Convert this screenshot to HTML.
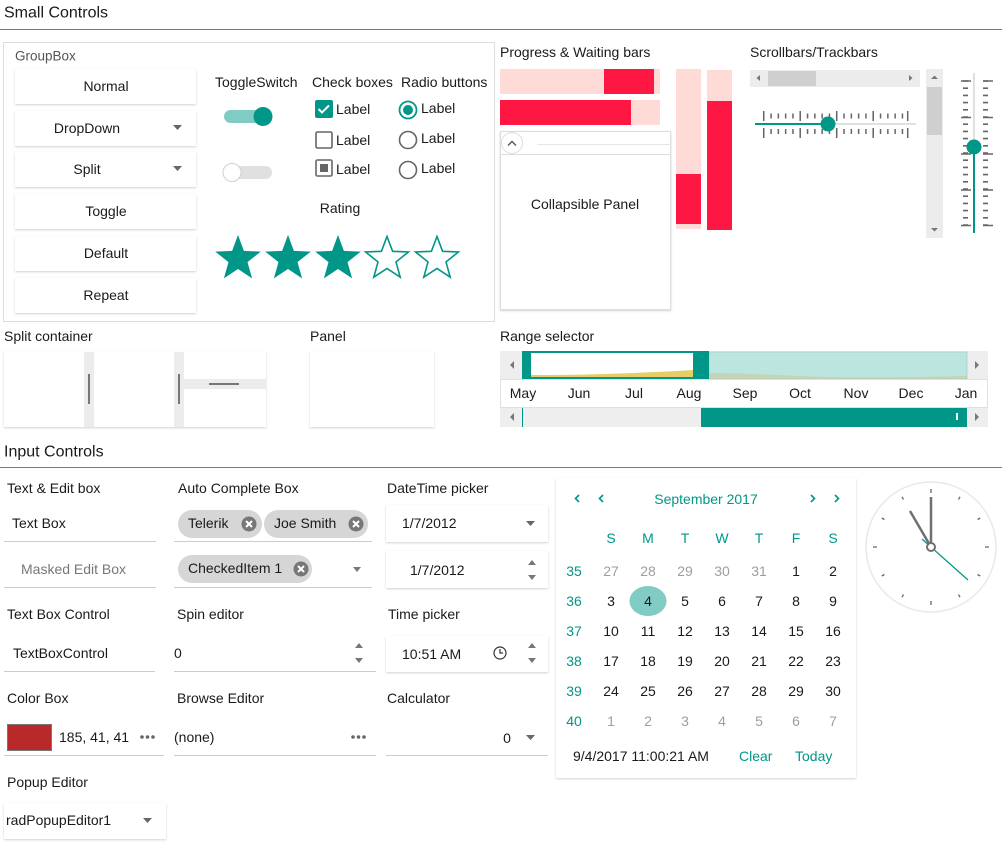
<!DOCTYPE html>
<html><head><meta charset="utf-8"><style>
html,body{margin:0;padding:0;background:#fff;width:1002px;height:843px;overflow:hidden}
svg{display:block}
text{font-family:"Liberation Sans",sans-serif;font-size:14px;fill:#1a1a1a;dominant-baseline:central}
.h{font-size:16px}
.c{text-anchor:middle}
.g{fill:#9e9e9e}
.t{fill:#009688}
.sub{fill:#555;font-size:13.5px}
</style></head><body>
<svg width="1002" height="843" viewBox="0 0 1002 843" xmlns="http://www.w3.org/2000/svg">
<defs>
<filter id="sh" x="-5%" y="-5%" width="110%" height="115%"><feDropShadow dx="0" dy="1" stdDeviation="1" flood-color="#000" flood-opacity="0.18"/></filter>
</defs>
<text x="4" y="13" class="h">Small Controls</text>
<rect x="0" y="29" width="1002" height="1" fill="#777"/>
<text x="4" y="452" class="h">Input Controls</text>
<rect x="0" y="467" width="1002" height="1" fill="#777"/>

<rect x="3.5" y="42.5" width="491" height="279" fill="#fff" stroke="#ddd"/>
<text x="15" y="56" class="sub">GroupBox</text>
<g fill="#fff" filter="url(#sh)">
<rect x="15" y="69" width="181" height="35"/>
<rect x="15" y="111" width="181" height="35"/>
<rect x="15" y="152" width="181" height="35"/>
<rect x="15" y="194" width="181" height="35"/>
<rect x="15" y="236" width="181" height="35"/>
<rect x="15" y="278" width="181" height="35"/>
</g>
<text x="106" y="86" class="c">Normal</text>
<text x="87" y="128" class="c">DropDown</text>
<text x="87" y="169" class="c">Split</text>
<text x="106" y="211" class="c">Toggle</text>
<text x="106" y="253" class="c">Default</text>
<text x="106" y="295" class="c">Repeat</text>
<path d="M173 125h9l-4.5 5z M173 166h9l-4.5 5z" fill="#666"/>

<text x="215" y="82">ToggleSwitch</text>
<rect x="224" y="110" width="46" height="13" rx="6.5" fill="#80cbc4"/>
<circle cx="263" cy="116.5" r="9.5" fill="#009688"/>
<rect x="224" y="166" width="48" height="13" rx="6.5" fill="#e0e0e0"/>
<circle cx="232" cy="172.5" r="9" fill="#fff" stroke="#d0d0d0"/>

<text x="312" y="82">Check boxes</text>
<rect x="315" y="100" width="18" height="18" rx="2" fill="#009688"/>
<path d="M318.5 109l3.5 3.5 7-7" stroke="#fff" stroke-width="2" fill="none"/>
<rect x="316" y="132" width="16" height="16" rx="1.5" fill="none" stroke="#666" stroke-width="1.6"/>
<rect x="316" y="160" width="16" height="16" rx="1.5" fill="none" stroke="#666" stroke-width="1.6"/>
<rect x="320" y="164" width="8" height="8" fill="#666"/>
<text x="336" y="109">Label</text>
<text x="336" y="140">Label</text>
<text x="336" y="169">Label</text>

<text x="401" y="82">Radio buttons</text>
<circle cx="408" cy="110" r="8.5" fill="none" stroke="#009688" stroke-width="1.8"/>
<circle cx="408" cy="110" r="5" fill="#009688"/>
<circle cx="408" cy="140" r="8.5" fill="none" stroke="#666" stroke-width="1.6"/>
<circle cx="408" cy="170" r="8.5" fill="none" stroke="#666" stroke-width="1.6"/>
<text x="421" y="108">Label</text>
<text x="421" y="138">Label</text>
<text x="421" y="168">Label</text>

<text x="340" y="208" class="c">Rating</text>
<g fill="#009688">
<polygon transform="translate(238,259)" points="0,-24 5.88,-8.09 22.83,-7.42 9.51,3.09 14.11,19.42 0,10 -14.11,19.42 -9.51,3.09 -22.83,-7.42 -5.88,-8.09"/>
<polygon transform="translate(288,259)" points="0,-24 5.88,-8.09 22.83,-7.42 9.51,3.09 14.11,19.42 0,10 -14.11,19.42 -9.51,3.09 -22.83,-7.42 -5.88,-8.09"/>
<polygon transform="translate(338,259)" points="0,-24 5.88,-8.09 22.83,-7.42 9.51,3.09 14.11,19.42 0,10 -14.11,19.42 -9.51,3.09 -22.83,-7.42 -5.88,-8.09"/>
</g>
<g fill="none" stroke="#009688" stroke-width="1.6">
<polygon transform="translate(387,259)" points="0,-22.5 5.6,-7.7 21.4,-7 9,2.9 13.2,18.2 0,9.4 -13.2,18.2 -9,2.9 -21.4,-7 -5.6,-7.7"/>
<polygon transform="translate(437,259)" points="0,-22.5 5.6,-7.7 21.4,-7 9,2.9 13.2,18.2 0,9.4 -13.2,18.2 -9,2.9 -21.4,-7 -5.6,-7.7"/>
</g>

<text x="500" y="52">Progress &amp; Waiting bars</text>
<rect x="500" y="69" width="160" height="25" fill="#ffdbd8"/>
<rect x="604" y="69" width="50" height="25" fill="#ff1744"/>
<rect x="500" y="100" width="160" height="25" fill="#ffdbd8"/>
<rect x="500" y="100" width="131" height="25" fill="#ff1744"/>
<rect x="676" y="69" width="25" height="160" fill="#ffdbd8"/>
<rect x="676" y="174" width="25" height="50" fill="#ff1744"/>
<rect x="707" y="70" width="25" height="160" fill="#ffdbd8"/>
<rect x="707" y="101" width="25" height="129" fill="#ff1744"/>

<rect x="500.5" y="131.5" width="170" height="178" fill="#fff" stroke="#ddd" filter="url(#sh)"/>
<rect x="500" y="154" width="171" height="1" fill="#ddd"/>
<rect x="537" y="144" width="134" height="1" fill="#e6e6e6"/>
<circle cx="512" cy="143" r="10.5" fill="#fff" stroke="#ddd"/>
<path d="M508 145.5l4-4 4 4" stroke="#555" stroke-width="1.4" fill="none"/>
<text x="585" y="204" class="c">Collapsible Panel</text>

<text x="750" y="52">Scrollbars/Trackbars</text>
<rect x="750" y="70" width="170" height="17" fill="#ececec"/>
<rect x="768" y="71" width="48" height="15" fill="#cfcfcf"/>
<path d="M760 75v6l-3.5-3z M909 75v6l3.5-3z" fill="#777"/>
<rect x="926" y="69" width="17" height="169" fill="#ececec"/>
<rect x="927" y="87" width="15" height="48" fill="#cfcfcf"/>
<path d="M931 79h7l-3.5-3.5z M931 228h7l-3.5 3.5z" fill="#777"/>
<line x1="763" y1="116" x2="909" y2="116" stroke="#666" stroke-width="5" stroke-dasharray="1.5 5.8"/>
<line x1="763" y1="131.5" x2="909" y2="131.5" stroke="#666" stroke-width="5" stroke-dasharray="1.5 5.8"/>
<g stroke="#666" stroke-width="1.5">
<path d="M763.7 111v10M800.2 111v10M836.7 111v10M873.2 111v10M907.7 111v10"/>
<path d="M763.7 128v10M800.2 128v10M836.7 128v10M873.2 128v10M907.7 128v10"/>
</g>
<rect x="755" y="123" width="161" height="2" fill="#e0e0e0"/>
<rect x="755" y="123" width="73" height="2" fill="#009688"/>
<circle cx="828" cy="124" r="7.5" fill="#009688"/>
<line x1="965.5" y1="80.2" x2="965.5" y2="227" stroke="#666" stroke-width="5" stroke-dasharray="1.6 5.6"/>
<line x1="985.5" y1="80.2" x2="985.5" y2="227" stroke="#666" stroke-width="5" stroke-dasharray="1.6 5.6"/>
<g stroke="#666" stroke-width="1.6">
<path d="M961 81h10M961 117.5h10M961 154h10M961 190h10M961 225.5h10"/>
<path d="M983 81h10M983 117.5h10M983 154h10M983 190h10M983 225.5h10"/>
</g>
<rect x="973" y="73" width="2" height="160" fill="#e0e0e0"/>
<rect x="973" y="147" width="2" height="86" fill="#009688"/>
<circle cx="974" cy="147" r="7.5" fill="#009688"/>

<text x="4" y="336">Split container</text>
<rect x="4" y="351" width="262" height="76" fill="#fff" filter="url(#sh)"/>
<rect x="84" y="352" width="10" height="75" fill="#ececec"/>
<rect x="174" y="352" width="10" height="75" fill="#ececec"/>
<rect x="184" y="379" width="82" height="10" fill="#ececec"/>
<rect x="88" y="374" width="2" height="30" fill="#777"/>
<rect x="178" y="374" width="2" height="30" fill="#777"/>
<rect x="209" y="383" width="30" height="2" fill="#777"/>
<text x="310" y="336">Panel</text>
<rect x="310" y="351" width="124" height="76" fill="#fff" filter="url(#sh)"/>

<text x="500" y="336">Range selector</text>
<rect x="500" y="351" width="488" height="28" fill="#eee"/>
<path d="M514 361v8l-4-4z M975 361v8l4-4z" fill="#777"/>
<rect x="709" y="352" width="258" height="27" fill="#bde5e0" stroke="#a0d0c8" stroke-width="0.8"/>
<path d="M709 373c40 0 80 3 120 4s90 0 138-1v3H709z" fill="#c8c89a" opacity="0.6"/>
<rect x="522" y="351" width="187" height="28" fill="#009688"/>
<rect x="531" y="353" width="162" height="24" fill="#fff"/>
<path d="M531 377v-2c60 0 110-2 162-5v7z" fill="#e0c040" opacity="0.8"/>
<rect x="500.5" y="379.5" width="487" height="28" fill="#fff" stroke="#e0e0e0"/>
<text x="523" y="393" class="c">May</text>
<text x="579" y="393" class="c">Jun</text>
<text x="634" y="393" class="c">Jul</text>
<text x="689" y="393" class="c">Aug</text>
<text x="745" y="393" class="c">Sep</text>
<text x="800" y="393" class="c">Oct</text>
<text x="856" y="393" class="c">Nov</text>
<text x="911" y="393" class="c">Dec</text>
<text x="966" y="393" class="c">Jan</text>
<rect x="500" y="408" width="488" height="19" fill="#eee"/>
<rect x="522" y="408" width="1" height="19" fill="#009688"/>
<rect x="701" y="408" width="266" height="19" fill="#009688"/>
<rect x="956" y="413" width="2" height="7" fill="#fff"/>
<path d="M514 413v8l-4-4z M975 413v8l4-4z" fill="#777"/>

<text x="7" y="488">Text &amp; Edit box</text>
<text x="12" y="523">Text Box</text>
<rect x="4" y="541" width="152" height="1" fill="#ccc"/>
<text x="21" y="569" style="fill:#777">Masked Edit Box</text>
<rect x="4" y="587" width="152" height="1" fill="#ccc"/>
<text x="7" y="614">Text Box Control</text>
<text x="13" y="653">TextBoxControl</text>
<rect x="4" y="671" width="151" height="1" fill="#ccc"/>
<text x="7" y="698">Color Box</text>
<rect x="7.5" y="724.5" width="44" height="26" fill="#b92929" stroke="#777"/>
<text x="59" y="737">185, 41, 41</text>
<g fill="#666"><circle cx="142" cy="737" r="1.8"/><circle cx="147.5" cy="737" r="1.8"/><circle cx="153" cy="737" r="1.8"/></g>
<rect x="4" y="755" width="160" height="1" fill="#ccc"/>
<text x="7" y="782">Popup Editor</text>
<rect x="4" y="803" width="162" height="36" fill="#fff" filter="url(#sh)"/>
<text x="6" y="820">radPopupEditor1</text>
<path d="M143 818h9l-4.5 5z" fill="#666"/>

<text x="178" y="488">Auto Complete Box</text>
<rect x="178" y="510" width="84" height="28" rx="14" fill="#d6d6d6"/>
<text x="188" y="523">Telerik</text>
<rect x="264" y="510" width="104" height="28" rx="14" fill="#d6d6d6"/>
<text x="274" y="523">Joe Smith</text>
<rect x="178" y="555" width="134" height="28" rx="14" fill="#d6d6d6"/>
<text x="188" y="568">CheckedItem 1</text>
<g>
<circle cx="249" cy="524" r="7.5" fill="#777"/><path d="M246 521l6 6M252 521l-6 6" stroke="#fff" stroke-width="2"/>
<circle cx="356" cy="524" r="7.5" fill="#777"/><path d="M353 521l6 6M359 521l-6 6" stroke="#fff" stroke-width="2"/>
<circle cx="301" cy="569" r="7.5" fill="#777"/><path d="M298 566l6 6M304 566l-6 6" stroke="#fff" stroke-width="2"/>
</g>
<rect x="174" y="541" width="198" height="1" fill="#ccc"/>
<path d="M353 567h8l-4 5z" fill="#777"/>
<rect x="174" y="587" width="198" height="1" fill="#ccc"/>
<text x="177" y="614">Spin editor</text>
<text x="174" y="653">0</text>
<path d="M355 648h8l-4-5z M355 658h8l-4 5z" fill="#777"/>
<rect x="174" y="671" width="202" height="1" fill="#ccc"/>
<text x="177" y="698">Browse Editor</text>
<text x="174" y="737">(none)</text>
<g fill="#666"><circle cx="353" cy="737" r="1.8"/><circle cx="358.5" cy="737" r="1.8"/><circle cx="364" cy="737" r="1.8"/></g>
<rect x="174" y="755" width="202" height="1" fill="#ccc"/>

<text x="387" y="488">DateTime picker</text>
<rect x="386" y="505" width="162" height="37" fill="#fff" filter="url(#sh)"/>
<text x="402" y="523">1/7/2012</text>
<path d="M526 521h9l-4.5 5z" fill="#666"/>
<rect x="386" y="551" width="162" height="37" fill="#fff" filter="url(#sh)"/>
<text x="410" y="570">1/7/2012</text>
<path d="M528 565h8l-4-5z M528 575h8l-4 5z" fill="#777"/>
<text x="388" y="614">Time picker</text>
<rect x="386" y="636" width="162" height="36" fill="#fff" filter="url(#sh)"/>
<text x="402" y="654">10:51 AM</text>
<circle cx="500" cy="653" r="6" fill="none" stroke="#333" stroke-width="1.2"/>
<path d="M500 649v4h3" stroke="#333" stroke-width="1.2" fill="none"/>
<path d="M528 648h8l-4-5z M528 658h8l-4 5z" fill="#777"/>
<text x="387" y="698">Calculator</text>
<text x="507" y="738" class="c">0</text>
<path d="M526 735h9l-4.5 5z" fill="#666"/>
<rect x="386" y="755" width="162" height="1" fill="#ccc"/>

<rect x="556" y="478" width="300" height="300" fill="#fff" filter="url(#sh)"/>
<g stroke="#009688" stroke-width="1.6" fill="none">
<path d="M579 495l-3.5 3.5 3.5 3.5M603 495l-3.5 3.5 3.5 3.5M811 495l3.5 3.5-3.5 3.5M835 495l3.5 3.5-3.5 3.5"/>
</g>
<text x="706" y="499" class="c t">September 2017</text>
<text x="611" y="538" class="c t">S</text><text x="648" y="538" class="c t">M</text><text x="685" y="538" class="c t">T</text><text x="722" y="538" class="c t">W</text><text x="759" y="538" class="c t">T</text><text x="796" y="538" class="c t">F</text><text x="833" y="538" class="c t">S</text>
<ellipse cx="648" cy="601" rx="18.5" ry="15" fill="#80cbc4"/>
<g>
<text x="574" y="571" class="c t">35</text><text x="574" y="601" class="c t">36</text><text x="574" y="631" class="c t">37</text><text x="574" y="661" class="c t">38</text><text x="574" y="691" class="c t">39</text><text x="574" y="721" class="c t">40</text>
<text x="611" y="571" class="c g">27</text><text x="648" y="571" class="c g">28</text><text x="685" y="571" class="c g">29</text><text x="722" y="571" class="c g">30</text><text x="759" y="571" class="c g">31</text><text x="796" y="571" class="c">1</text><text x="833" y="571" class="c">2</text>
<text x="611" y="601" class="c">3</text><text x="648" y="601" class="c">4</text><text x="685" y="601" class="c">5</text><text x="722" y="601" class="c">6</text><text x="759" y="601" class="c">7</text><text x="796" y="601" class="c">8</text><text x="833" y="601" class="c">9</text>
<text x="611" y="631" class="c">10</text><text x="648" y="631" class="c">11</text><text x="685" y="631" class="c">12</text><text x="722" y="631" class="c">13</text><text x="759" y="631" class="c">14</text><text x="796" y="631" class="c">15</text><text x="833" y="631" class="c">16</text>
<text x="611" y="661" class="c">17</text><text x="648" y="661" class="c">18</text><text x="685" y="661" class="c">19</text><text x="722" y="661" class="c">20</text><text x="759" y="661" class="c">21</text><text x="796" y="661" class="c">22</text><text x="833" y="661" class="c">23</text>
<text x="611" y="691" class="c">24</text><text x="648" y="691" class="c">25</text><text x="685" y="691" class="c">26</text><text x="722" y="691" class="c">27</text><text x="759" y="691" class="c">28</text><text x="796" y="691" class="c">29</text><text x="833" y="691" class="c">30</text>
<text x="611" y="721" class="c g">1</text><text x="648" y="721" class="c g">2</text><text x="685" y="721" class="c g">3</text><text x="722" y="721" class="c g">4</text><text x="759" y="721" class="c g">5</text><text x="796" y="721" class="c g">6</text><text x="833" y="721" class="c g">7</text>
</g>
<text x="573" y="756">9/4/2017 11:00:21 AM</text>
<text x="739" y="756" class="t">Clear</text>
<text x="795" y="756" class="t">Today</text>

<circle cx="931" cy="547" r="65" fill="#fff" stroke="#e3ecea" stroke-width="1.5"/>
<g stroke="#666" stroke-width="1.3">
<path d="M931 489v4M931 601v4M873 547h4M985 547h4"/>
<path d="M960 496.8l-1.5 2.6M980.2 518l-2.6 1.5M980.2 576l-2.6-1.5M960 597.2l-1.5-2.6M902 597.2l1.5-2.6M881.8 576l2.6-1.5M881.8 518l2.6 1.5M902 496.8l1.5 2.6"/>
</g>
<line x1="931" y1="547" x2="910" y2="511" stroke="#707070" stroke-width="2.5"/>
<line x1="931" y1="547" x2="931" y2="497" stroke="#707070" stroke-width="2.5"/>
<line x1="922" y1="539" x2="968" y2="580" stroke="#009688" stroke-width="1.2"/>
<circle cx="931" cy="547" r="4" fill="#fff" stroke="#707070" stroke-width="2"/>
</svg>
</body></html>
